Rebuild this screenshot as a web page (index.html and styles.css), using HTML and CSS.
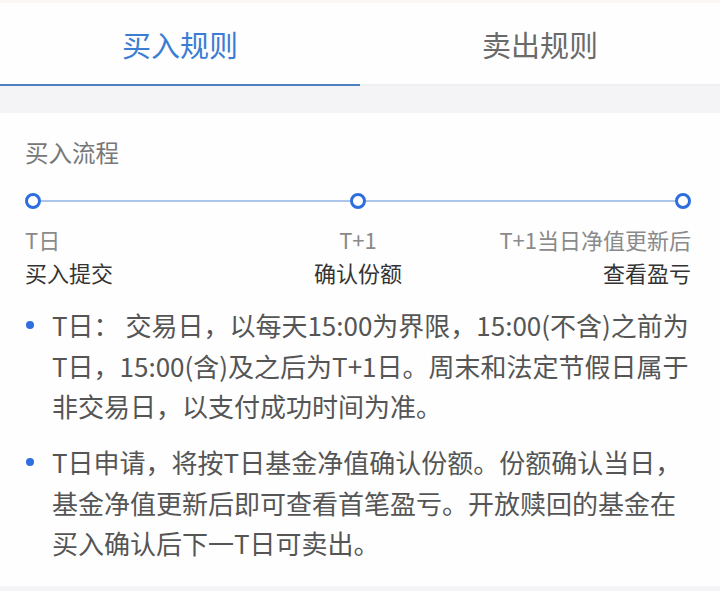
FILE: index.html
```html
<!DOCTYPE html>
<html lang="zh-CN">
<head>
<meta charset="utf-8">
<title>买入规则</title>
<link rel="stylesheet" href="styles.css">
</head>
<body>
<div class="page">
  <div class="topband"></div>
  <nav class="tabs">
    <div class="tab active">买入规则</div>
    <div class="tab">卖出规则</div>
  </nav>
  <div class="gap"></div>
  <section class="card">
    <h2 class="title">买入流程</h2>
    <div class="timeline">
      <span class="node"></span>
      <span class="seg"></span>
      <span class="node"></span>
      <span class="seg"></span>
      <span class="node"></span>
    </div>
    <div class="steps">
      <div class="step left">
        <div class="when">T日</div>
        <div class="what">买入提交</div>
      </div>
      <div class="step center">
        <div class="when">T+1</div>
        <div class="what">确认份额</div>
      </div>
      <div class="step right">
        <div class="when">T+1当日净值更新后</div>
        <div class="what">查看盈亏</div>
      </div>
    </div>
    <ul class="notes">
      <li>T日：&nbsp;交易日，以每天15:00为界限，15:00(不含)之前为<br>T日，15:00(含)及之后为T+1日。周末和法定节假日属于<br>非交易日，以支付成功时间为准。</li>
      <li>T日申请，将按T日基金净值确认份额。份额确认当日，<br>基金净值更新后即可查看首笔盈亏。开放赎回的基金在<br>买入确认后下一T日可卖出。</li>
    </ul>
  </section>
</div>
</body>
</html>
```

FILE: styles.css
```css
* { box-sizing: border-box; }
html, body {
  margin: 0;
  padding: 0;
  background: #f4f4f6;
  font-family: "Noto Sans CJK SC", "Noto Sans", sans-serif;
}
.page {
  width: 720px;
  height: 591px;
  overflow: hidden;
}
.topband {
  height: 3px;
  background: #fbf8f3;
}
.tabs {
  display: flex;
  height: 83px;
  background: #fefefe;
  border-bottom: 2px solid #eeeff1;
}
.tab {
  flex: 1;
  display: flex;
  align-items: center;
  justify-content: center;
  font-size: 29px;
  color: #6a6a6a;
  margin-bottom: -2px;
  border-bottom: 2px solid transparent;
}
.tab.active {
  color: #3b7dd2;
  border-bottom-color: #4d80c2;
}
.gap {
  height: 27px;
}
.card {
  background: #fefefe;
  padding: 24px 29px 23px 25px;
  height: 473px;
}
.title {
  margin: 0;
  font-weight: normal;
  font-size: 23.5px;
  line-height: 30px;
  color: #777;
}
.timeline {
  margin-top: 26px;
  display: flex;
  align-items: center;
  height: 16px;
}
.node {
  width: 16px;
  height: 16px;
  border-radius: 50%;
  border: 3px solid #2c6ee0;
  background: #fff;
  flex: none;
}
.seg {
  flex: 1;
  height: 2px;
  background: #abc6ea;
}
.steps {
  margin-top: 16px;
  display: flex;
  justify-content: space-between;
}
.step {
  display: flex;
  flex-direction: column;
}
.step.left { align-items: flex-start; width: 240px; }
.step.center { align-items: center; }
.step.right { align-items: flex-end; width: 240px; }
.when {
  font-size: 22px;
  line-height: 28px;
  color: #8a8a8a;
}
.what {
  margin-top: 4px;
  font-size: 22px;
  line-height: 30px;
  color: #333;
}
.notes {
  list-style: none;
  margin: 18px 0 0;
  padding: 0;
}
.notes li {
  position: relative;
  padding-left: 27px;
  font-size: 26px;
  line-height: 40.5px;
  color: #555;
  white-space: nowrap;
}
.notes li + li {
  margin-top: 15.5px;
}
.notes li::before {
  content: "";
  position: absolute;
  left: 1px;
  top: 16px;
  width: 8px;
  height: 8px;
  border-radius: 50%;
  background: #2f6fe0;
}
```
